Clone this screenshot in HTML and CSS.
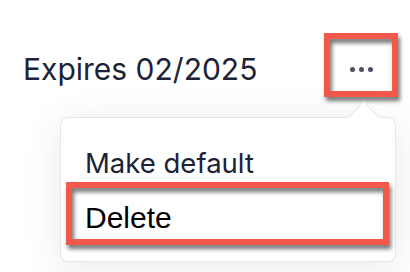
FILE: index.html
```html
<!DOCTYPE html>
<html>
<head>
<meta charset="utf-8">
<link rel="stylesheet" href="styles.css">
</head>
<body>
<div class="row">
  <span class="expires">Expires 02/2025</span>
  <button class="more" aria-label="More"><i></i><i></i><i></i></button>
</div>
<div class="popover">
  <span class="arrow"></span>
  <ul class="menu">
    <li class="item">Make default</li>
    <li class="item delete">Delete</li>
  </ul>
</div>
</body>
</html>
```

FILE: styles.css
```css
html, body {
  margin: 0;
  padding: 0;
}
body {
  width: 410px;
  height: 272px;
  background: #fff;
  position: relative;
  overflow: hidden;
  font-family: Inter, "Noto Sans", sans-serif;
}
.row {
  display: flex;
  align-items: center;
  justify-content: space-between;
  height: 50px;
  padding: 44px 18px 0 23px;
}
.expires {
  font-size: 30px;
  color: #1d2236;
  line-height: 50px;
}
.more {
  position: relative;
  width: 62px;
  height: 50px;
  border: 0;
  background: transparent;
  padding: 0;
  display: flex;
  align-items: center;
  justify-content: center;
  gap: 4px;
}
.more i {
  width: 5px;
  height: 5px;
  border-radius: 50%;
  background: #4a4f63;
}
.more::after {
  content: "";
  position: absolute;
  left: -6px;
  right: -6px;
  top: -11px;
  bottom: -3px;
  border: 6px solid #f2594b;
  filter: drop-shadow(2px 4px 2px rgba(0, 0, 0, 0.55));
}
.popover {
  position: absolute;
  left: 60px;
  top: 117px;
  width: 334px;
  height: 143px;
  background: #fff;
  border: 1px solid #e6e6eb;
  border-radius: 8px;
  box-shadow: 0 6px 40px rgba(0, 0, 0, 0.09);
}
.arrow {
  position: absolute;
  left: 291px;
  top: -12px;
  width: 22px;
  height: 22px;
  background: #fff;
  border-left: 1px solid #e6e6eb;
  border-top: 1px solid #e6e6eb;
  transform: rotate(45deg);
}
.menu {
  list-style: none;
  margin: 0;
  padding: 19px 0 0;
  position: relative;
}
.item {
  position: relative;
  height: 51px;
  display: flex;
  align-items: center;
  padding-left: 24px;
  font-size: 27.5px;
  color: #1d2236;
  box-sizing: border-box;
}
.item.delete {
  font-family: "Liberation Sans", Arial, sans-serif;
  font-size: 30px;
  color: #000;
  padding-top: 8px;
}
.item.delete::after {
  content: "";
  position: absolute;
  left: 5px;
  right: 6px;
  top: -6px;
  bottom: -6px;
  border: 6px solid #f2594b;
  filter: drop-shadow(2px 4px 2px rgba(0, 0, 0, 0.55));
}
```
